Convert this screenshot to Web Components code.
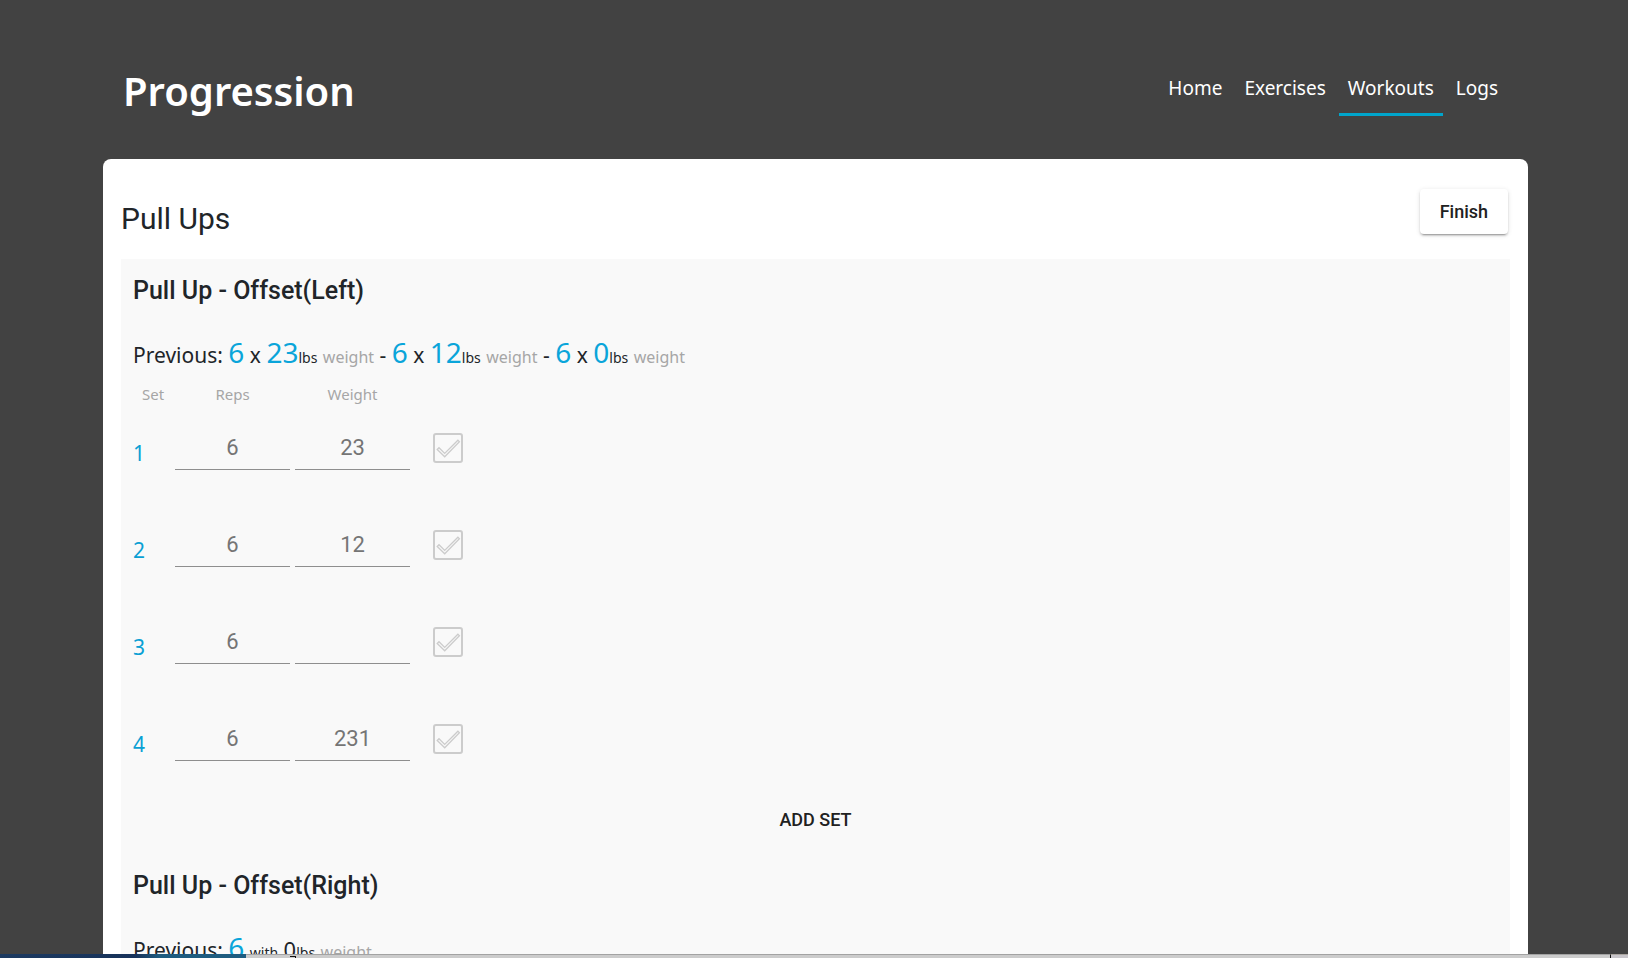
<!DOCTYPE html>
<html lang="en">
<head>
<meta charset="utf-8">
<title>Progression</title>
<style>
  html, body { margin: 0; height: 100%; }
  body { background: #424242; font-family: "Noto Sans", "Open Sans", sans-serif; color: #212529; }
</style>
</head>
<body>
<progression-app></progression-app>
<script>
  const define = (name, html, setup) => {
    const template = document.createElement('template');
    template.innerHTML = html;
    customElements.define(name, class extends HTMLElement {
      constructor() {
        super();
        this.attachShadow({ mode: 'open' }).append(template.content.cloneNode(true));
      }
      connectedCallback() { if (setup) setup.call(this, this.shadowRoot); }
    });
  };

  define('nav-link', `
    <style>
      :host { display: block; }
      a { display: block; padding: 0 9px 11px; border-bottom: 3px solid transparent; color: #fff; font-size: 19px; line-height: 28px; text-decoration: none; }
      :host([active]) a { border-color: #00a5cc; }
    </style>
    <a href="#"><slot></slot></a>`);

  define('site-header', `
    <style>
      :host { display: flex; justify-content: space-between; align-items: flex-start; padding: 61px 21px 38px 20px; }
      h1 { margin: 0; color: #fff; font-size: 40px; line-height: 60px; font-weight: 600; }
      nav { display: flex; gap: 4px; padding-top: 13px; }
    </style>
    <h1>Progression</h1>
    <nav>
      <nav-link>Home</nav-link>
      <nav-link>Exercises</nav-link>
      <nav-link active>Workouts</nav-link>
      <nav-link>Logs</nav-link>
    </nav>`);

  define('flat-button', `
    <style>
      :host { display: inline-block; }
      button { height: 45px; padding: 0 20px; border: 0; border-radius: 4px; background: transparent; color: #212121; font: 500 18px/45px Roboto, sans-serif; }
      :host([raised]) button { background: #fff; box-shadow: 0 3px 1px -2px rgba(0,0,0,.2), 0 2px 2px rgba(0,0,0,.14), 0 1px 5px rgba(0,0,0,.12); }
    </style>
    <button type="button"><slot></slot></button>`);

  define('set-value', `
    <style>
      :host { display: inline; font-size: 22px; }
      :host([accent]) { color: #0aa5da; font-size: 28px; }
    </style><slot></slot>`);

  define('previous-sets', `
    <style>
      :host { display: block; font-size: 21px; line-height: 40px; white-space: nowrap; }
      ::slotted(small) { font-size: 14px; }
      ::slotted(i) { font-size: 16px; font-style: normal; color: #a6a6a6; }
    </style>Previous: <slot></slot>`);

  define('set-row', `
    <style>
      :host { display: grid; grid-template-columns: 42px 115px 115px 30px; align-items: start; height: 81px; }
      .number { padding-top: 12px; color: #0aa0d4; font-size: 21px; line-height: 32px; }
      .field { box-sizing: border-box; width: 115px; height: 45px; margin: 0; padding: 0; border: 0; border-bottom: 1px solid #8e8e8e; border-radius: 0; background: transparent; font: 400 22px/32px Roboto, sans-serif; text-align: center; color: #757575; outline: 0; }
      .weight { margin-left: 5px; }
      .done { display: grid; width: 30px; height: 30px; margin: 8px 0 0 28px; }
      .done > * { grid-area: 1 / 1; }
      .done input { box-sizing: border-box; appearance: none; width: 30px; height: 30px; margin: 0; border: 2px solid #ccc; border-radius: 3px; }
      svg { display: block; pointer-events: none; }
    </style>
    <span class="number"></span>
    <input class="field reps" type="text" aria-label="Reps">
    <input class="field weight" type="text" aria-label="Weight">
    <label class="done"><input type="checkbox" aria-label="Set done">
      <svg width="30" height="30" viewBox="0 0 30 30" fill="none" stroke="#ccc" stroke-width="1.3"><path d="M4.2 16.5 6 14.7 11.7 20.4 24.9 7.2 26.4 8.7 11.7 23.8Z"/></svg>
    </label>`, function (root) {
      root.querySelector('.number').textContent = this.getAttribute('number');
      root.querySelector('.reps').value = this.getAttribute('reps');
      root.querySelector('.weight').value = this.getAttribute('weight');
    });

  define('set-list', `
    <style>
      :host { display: grid; row-gap: 16px; }
    </style><slot></slot>`);

  define('exercise-block', `
    <style>
      :host { display: block; padding: 0 12px 24px; }
      ::slotted(h3) { margin: 0 0 21px; font: 500 25px/40px Roboto, sans-serif; }
      ::slotted(flat-button) { display: block; text-align: center; }
    </style><slot></slot>`);

  define('column-labels', `
    <style>
      :host { display: grid; grid-template-columns: 34px 115px 115px; column-gap: 5px; padding: 5px 0 0 3px; height: 42px; font-size: 15px; line-height: 22px; color: #a6a6a6; text-align: center; }
    </style>
    <span>Set</span><span>Reps</span><span>Weight</span>`);

  define('workout-card', `
    <style>
      :host { display: block; padding: 30px 18px 0; background: #fff; border-radius: 8px 8px 0 0; }
      header { display: flex; justify-content: space-between; align-items: flex-start; height: 70px; padding-right: 2px; }
      h2 { margin: 0; padding-top: 11px; font: 400 30px/38px Roboto, sans-serif; }
      section { padding-top: 12px; background: #f9f9f9; }
    </style>
    <header><h2>Pull Ups</h2><flat-button raised>Finish</flat-button></header>
    <section><slot></slot></section>`);

  define('playback-bar', `
    <style>
      :host { display: flex; height: 4px; background: #ccc; }
      div { box-sizing: border-box; height: 4px; }
      .played { width: 246px; background: linear-gradient(90deg, #1d3a60, #17325a 55%, #1e5c80 65%, #1e5c80); }
      .rest { flex: 1; padding: 1px 0 0 44px; border-top: 1px solid #a3a3a3; }
      .mark { width: 6px; height: 2px; border: solid #111; border-width: 1px 1px 0 0; }
      .end { width: 18px; border-top: 1px solid #aaa5a0; border-left: 1px solid #111; background: #c8c5ca; }
    </style>
    <div class="played"></div><div class="rest"><div class="mark"></div></div><div class="end"></div>`);

  define('progression-app', `
    <style>
      :host { display: flex; flex-direction: column; height: 100vh; overflow: hidden; }
      main { flex: 1; min-height: 0; overflow: hidden; padding: 0 100px 0 103px; }
      playback-bar { flex: none; }
    </style>
    <main>
      <site-header></site-header>
      <workout-card>
        <exercise-block>
          <h3>Pull Up - Offset(Left)</h3>
          <previous-sets><set-value accent>6</set-value> x <set-value accent>23</set-value><small>lbs</small> <i>weight</i> - <set-value accent>6</set-value> x <set-value accent>12</set-value><small>lbs</small> <i>weight</i> - <set-value accent>6</set-value> x <set-value accent>0</set-value><small>lbs</small> <i>weight</i></previous-sets>
          <column-labels></column-labels>
          <set-list>
            <set-row number="1" reps="6" weight="23"></set-row>
            <set-row number="2" reps="6" weight="12"></set-row>
            <set-row number="3" reps="6" weight=""></set-row>
            <set-row number="4" reps="6" weight="231"></set-row>
          </set-list>
          <flat-button>ADD SET</flat-button>
        </exercise-block>
        <exercise-block>
          <h3>Pull Up - Offset(Right)</h3>
          <previous-sets><set-value accent>6</set-value> <small>with</small> <set-value>0</set-value><small>lbs</small> <i>weight</i></previous-sets>
        </exercise-block>
      </workout-card>
    </main>
    <playback-bar></playback-bar>`);
</script>
</body>
</html>
